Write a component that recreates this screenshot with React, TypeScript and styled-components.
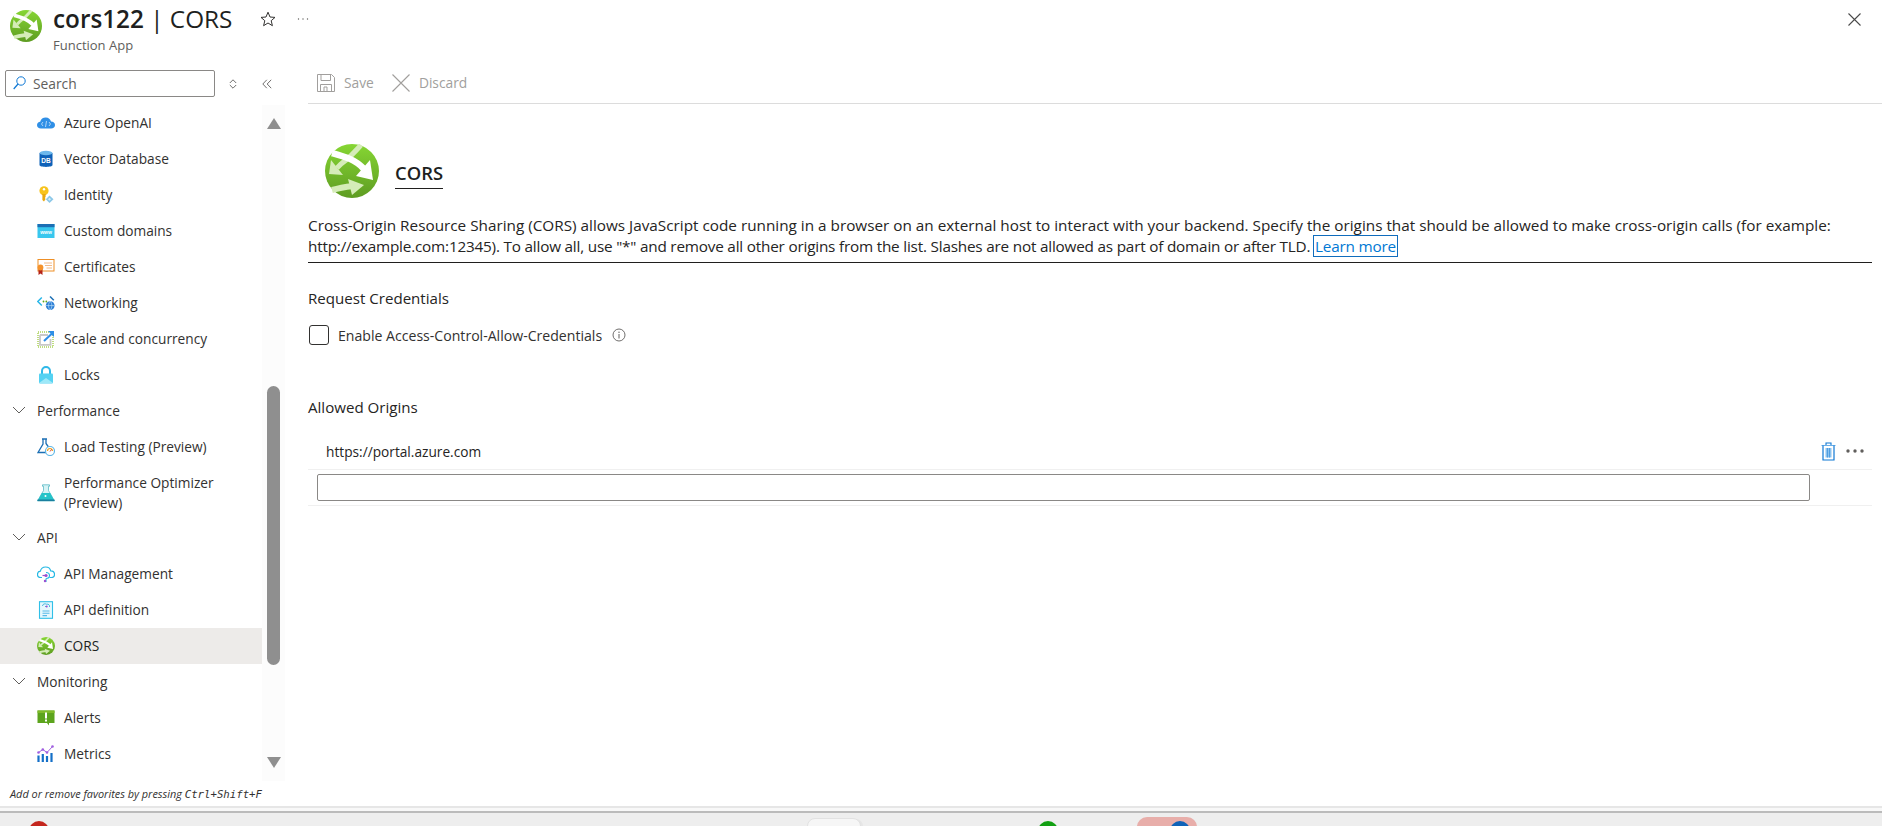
import React from 'react';
import styled, { createGlobalStyle } from 'styled-components';

const GlobalStyle = createGlobalStyle`
  html, body {
    margin: 0;
    padding: 0;
    background: #fff;
    overflow: hidden;
  }
  body {
    font-family: "Open Sans", "Noto Sans", sans-serif;
    font-size: 13.7px;
    color: #323130;
  }
`;

const Page = styled.div`
  width: 1882px;
  height: 826px;
  display: flex;
  flex-direction: column;
  overflow: hidden;
`;

const Header = styled.header`
  height: 60px;
  flex: none;
  display: flex;
  padding: 10px 21px 0 10px;
  box-sizing: border-box;
`;

const TitleBlock = styled.div`
  margin-left: 11px;
  margin-top: -8px;
`;

const Title = styled.h1`
  margin: 0;
  font-size: 24.3px;
  line-height: 33px;
  font-weight: 400;
  color: #201f1e;
  white-space: nowrap;
  strong {
    font-weight: 600;
  }
`;

const Subtitle = styled.div`
  font-size: 13px;
  line-height: 16px;
  color: #605e5c;
  margin-top: 2px;
`;

const HeaderAction = styled.div<{ $gap: number }>`
  margin-left: ${(p) => p.$gap}px;
  margin-top: 1px;
  height: 16px;
  display: flex;
`;

const CloseButton = styled.div`
  margin-left: auto;
  margin-top: 1px;
`;

const Body = styled.div`
  flex: 1;
  display: flex;
  min-height: 0;
`;

const Sidebar = styled.aside`
  width: 285px;
  flex: none;
  display: flex;
  flex-direction: column;
`;

const SearchRow = styled.div`
  height: 27px;
  margin: 10px 0 8px 5px;
  display: flex;
  align-items: center;
  flex: none;
`;

const SearchBox = styled.div`
  width: 210px;
  height: 27px;
  box-sizing: border-box;
  border: 1px solid #8a8886;
  border-radius: 2px;
  display: flex;
  align-items: center;
  padding: 0 0 1px 7px;
  gap: 7px;
  color: #605e5c;
  font-size: 13.8px;
`;

const SearchAction = styled.div<{ $gap: number }>`
  margin-left: ${(p) => p.$gap}px;
  display: flex;
`;

const NavArea = styled.div`
  height: 676px;
  display: flex;
  flex: none;
`;

const NavList = styled.nav`
  width: 262px;
  flex: none;
`;

const NavRow = styled.div<{ $active?: boolean; $tall?: boolean }>`
  height: ${(p) => (p.$tall ? 55 : 36)}px;
  display: flex;
  align-items: center;
  gap: 9px;
  padding-left: 37px;
  box-sizing: border-box;
  line-height: 20px;
  color: ${(p) => (p.$active ? '#201f1e' : '#323130')};
  background: ${(p) => (p.$active ? '#edebe9' : 'transparent')};
`;

const NavGroup = styled.div`
  height: 36px;
  display: flex;
  align-items: center;
  gap: 11px;
  padding: 0 0 2px 12px;
  box-sizing: border-box;
  color: #323130;
`;

const NavIcon = styled.span`
  width: 18px;
  height: 18px;
  flex: none;
  display: flex;
`;

const ScrollTrack = styled.div`
  width: 23px;
  flex: none;
  background: #fcfcfc;
  display: flex;
  flex-direction: column;
  align-items: center;
`;

const ScrollArrow = styled.div<{ $down?: boolean }>`
  width: 0;
  height: 0;
  border-left: 7px solid transparent;
  border-right: 7px solid transparent;
  ${(p) => (p.$down ? 'border-top: 11px solid #8f8f8f;' : 'border-bottom: 11px solid #8f8f8f;')}
  margin-top: ${(p) => (p.$down ? 'auto' : '13px')};
  margin-bottom: ${(p) => (p.$down ? '13px' : '0')};
`;

const ScrollThumb = styled.div`
  width: 13px;
  height: 279px;
  border-radius: 7px;
  background: #8f8f8f;
  margin-top: 257px;
`;

const Hint = styled.div`
  flex: 1;
  padding: 3px 0 0 10px;
  font-size: 10.9px;
  line-height: 20px;
  font-style: italic;
  color: #323130;
  white-space: nowrap;
  code {
    font-family: "DejaVu Sans Mono", monospace;
    font-size: 10.7px;
  }
`;

const Main = styled.main`
  margin-left: 23px;
  flex: 1;
  min-width: 0;
`;

const Toolbar = styled.div`
  margin-top: 10px;
  height: 34px;
  box-sizing: border-box;
  border-bottom: 1px solid #dcdcdc;
  padding: 0 0 8px 9px;
  display: flex;
  align-items: center;
  color: #a19f9d;
`;

const ToolButton = styled.div<{ $gap: number }>`
  display: flex;
  align-items: center;
  gap: 9px;
  margin-right: ${(p) => p.$gap}px;
  font-size: 13.8px;
`;

const Content = styled.div`
  width: 1564px;
`;

const Hero = styled.div`
  display: flex;
  margin: 40px 0 0 17px;
`;

const HeroTitle = styled.h2`
  margin: 16px 0 0 16px;
  height: 29px;
  box-sizing: border-box;
  border-bottom: 1px solid #201f1e;
  font-size: 18.4px;
  line-height: 25px;
  font-weight: 600;
  color: #201f1e;
`;

const Description = styled.p`
  margin: 17px 0 0;
  padding-bottom: 6px;
  border-bottom: 1px solid #201f1e;
  font-size: 15.3px;
  line-height: 20.5px;
  color: #252423;
  white-space: nowrap;
`;

const TightLine = styled.span`
  letter-spacing: -0.2px;
`;

const LearnMore = styled.a`
  color: #0078d4;
  outline: 1px solid #0f6cbd;
  padding: 0 1px;
`;

const SectionLabel = styled.div<{ $top: number }>`
  margin-top: ${(p) => p.$top}px;
  font-size: 15.1px;
  line-height: 20px;
  color: #252423;
`;

const CheckRow = styled.label`
  display: flex;
  align-items: center;
  margin: 17px 0 0 1px;
  height: 20px;
  font-size: 14.1px;
`;

const CheckBox = styled.span`
  width: 20px;
  height: 20px;
  box-sizing: border-box;
  border: 1px solid #323130;
  border-radius: 3px;
  margin-right: 9px;
`;

const InfoIcon = styled.span`
  display: flex;
  margin-left: 10px;
`;

const OriginRow = styled.div`
  margin-top: 16px;
  height: 37px;
  box-sizing: border-box;
  padding: 0 8px 0 18px;
  border-bottom: 1px solid #f0f0f0;
  display: flex;
  align-items: center;
  color: #252423;
`;

const OriginActions = styled.div`
  margin-left: auto;
  display: flex;
  align-items: center;
  gap: 10px;
`;

const InputRow = styled.div`
  height: 36px;
  box-sizing: border-box;
  padding: 4px 0 0 9px;
  border-bottom: 1px solid #f0f0f0;
`;

const OriginInput = styled.div`
  width: 1493px;
  height: 27px;
  box-sizing: border-box;
  border: 1px solid #8a8886;
  border-radius: 2px;
`;

const Shelf = styled.div`
  height: 20px;
  flex: none;
  display: flex;
  flex-direction: column;
  border-top: 2px solid #e6e6e6;
  box-sizing: border-box;
  background: #f8f8f8;
`;

const Taskbar = styled.div`
  margin-top: 3px;
  flex: 1;
  border-top: 2px solid #bbbbbb;
  background: #eeeeee;
  display: flex;
  overflow: hidden;
  padding-left: 29px;
`;

const TaskDot = styled.div<{ $color: string; $left: number }>`
  width: 20px;
  height: 20px;
  flex: none;
  border-radius: 50%;
  background: ${(p) => p.$color};
  margin: 8px 0 0 ${(p) => p.$left}px;
`;

const TaskCard = styled.div`
  width: 52px;
  height: 30px;
  flex: none;
  margin: 5px 0 0 758px;
  border: 1px solid #e2e2e2;
  border-radius: 8px;
  background: #f6f6f6;
  box-shadow: 3px 0 0 -1px #e6e6e6;
`;

const TaskPill = styled.div`
  width: 60px;
  height: 30px;
  flex: none;
  margin: 4px 0 0 79px;
  border-radius: 10px;
  background: #e8aeaa;
  display: flex;
  padding-left: 33px;
  box-sizing: border-box;
`;

const PillDot = styled(TaskDot)`
  margin: 4px 0 0 0;
`;

const AppGlyph = ({ size, uid }: { size: number; uid: string }) => (
  <svg width={size} height={size} viewBox="0 0 54 54" style={{ flex: 'none' }}>
    <defs>
      <linearGradient id={uid} x1="0" y1="0" x2="0" y2="1">
        <stop offset="0" stopColor="#86d633" />
        <stop offset="1" stopColor="#5e9c22" />
      </linearGradient>
    </defs>
    <circle cx="27" cy="27" r="27" fill={`url(#${uid})`} />
    <path d="M36 1 C30 8 24 14 16 20 L12 24" stroke="#d5ecb8" strokeWidth="5" fill="none" />
    <path d="M4 30 L6 16 L18 31 Z" fill="#d5ecb8" />
    <path d="M7 9 C18 12 30 15 39 25" stroke="#fff" strokeWidth="6.5" fill="none" />
    <path d="M48 36 L45 16 L31 32 Z" fill="#fff" />
    <path d="M7 46 C14 44 20 43 28 42" stroke="#d5ecb8" strokeWidth="6" fill="none" />
    <path d="M39 41 L23 35 L27 51 Z" fill="#d5ecb8" />
  </svg>
);

const OpenAiIcon = () => (
  <svg width="18" height="18" viewBox="0 0 18 18">
    <path d="M4 14.5 C1.5 14.5 0 13 0 11 C0 9 1.5 7.7 3.2 7.7 C3.8 5 6 3.5 8.8 3.5 C11.5 3.5 13.5 5.2 14 7.5 C16.3 7.6 18 9 18 11 C18 13 16.5 14.5 14 14.5 Z" fill="#2f8fe6" />
    <path d="M6 8 L4.5 10 L6 12 M12 8 L13.5 10 L12 12 M9.5 7 L8.5 13" stroke="#cfe6fb" strokeWidth="0.8" fill="none" />
  </svg>
);

const DbIcon = () => (
  <svg width="18" height="18" viewBox="0 0 18 18">
    <path d="M2.5 3 V15 C2.5 17.5 15.5 17.5 15.5 15 V3 Z" fill="#0f62b8" />
    <ellipse cx="9" cy="3" rx="6.5" ry="2.2" fill="#6cb8ec" />
    <text x="9" y="13" textAnchor="middle" fontFamily="Liberation Sans, sans-serif" fontSize="6.5" fontWeight="700" fill="#fff">DB</text>
  </svg>
);

const IdentityIcon = () => (
  <svg width="18" height="18" viewBox="0 0 18 18">
    <circle cx="7" cy="4.8" r="4.6" fill="#f7c31c" />
    <circle cx="7" cy="3.3" r="1.2" fill="#fff" />
    <path d="M5.4 8 H8.6 V11 L7.8 12 L8.6 13 L7 15.5 L5.4 14 Z" fill="#e8a80e" />
    <path d="M12.5 9.5 L16.5 13.2 L12.5 17 L8.8 13.2 Z" fill="#8cc8e8" />
    <path d="M12.5 11.8 L14 13.2 L12.5 14.7 L11 13.2 Z" fill="#d7eef9" />
  </svg>
);

const DomainIcon = () => (
  <svg width="18" height="18" viewBox="0 0 18 18">
    <rect x="0.5" y="2" width="17" height="14" fill="#38c7ee" />
    <rect x="0.5" y="2" width="17" height="3.2" fill="#1c6fb4" />
    <text x="9" y="11.8" textAnchor="middle" fontFamily="Liberation Sans, sans-serif" fontSize="5" fontWeight="700" fill="#fff">www</text>
  </svg>
);

const CertIcon = () => (
  <svg width="18" height="18" viewBox="0 0 18 18">
    <rect x="1" y="1.5" width="16" height="11.5" fill="#fff" stroke="#ee8f26" strokeWidth="1" />
    <path d="M7 5 H15 M8 7.5 H15 M9.5 10 H15" stroke="#f0b27a" strokeWidth="0.9" />
    <path d="M1.5 11 V17 L3.5 15.6 L5.5 17 V11 Z" fill="#b52418" />
    <circle cx="3.5" cy="9.5" r="2.9" fill="#f5922a" />
  </svg>
);

const NetworkIcon = () => (
  <svg width="18" height="18" viewBox="0 0 18 18">
    <path d="M4.8 3.5 L0.8 7.5 L4.8 11.5" stroke="#29b6e8" strokeWidth="1.5" fill="none" />
    <path d="M13 2.5 L16.8 6.2" stroke="#1c6fb4" strokeWidth="1.5" fill="none" />
    <circle cx="6.5" cy="7.5" r="0.9" fill="#5ea51e" />
    <circle cx="9.3" cy="7.5" r="0.9" fill="#5ea51e" />
    <circle cx="13.2" cy="11.6" r="4.4" fill="#2c7fd6" />
    <path d="M9 11.6 H17.5 M13.2 7.2 C11 10 11 13.5 13.2 16 C15.4 13.5 15.4 10 13.2 7.2" stroke="#bcdcf6" strokeWidth="0.7" fill="none" />
  </svg>
);

const ScaleIcon = () => (
  <svg width="18" height="18" viewBox="0 0 18 18">
    <rect x="1" y="2" width="15" height="15" fill="none" stroke="#7fba00" strokeWidth="1" strokeDasharray="1 1" />
    <path d="M3 5 H11 M3 5 V14.8 H13.5 V9" stroke="#c8c8c8" strokeWidth="1.8" fill="none" />
    <path d="M7 11 L15 3.5" stroke="#2f8fe6" strokeWidth="2" />
    <path d="M11 1 H17 V7 Z" fill="#2f8fe6" />
  </svg>
);

const LockIcon = () => (
  <svg width="18" height="18" viewBox="0 0 18 18">
    <path d="M5 8 V5 C5 2.8 6.8 1 9 1 C11.2 1 13 2.8 13 5 V8" stroke="#2fb8e8" strokeWidth="2" fill="none" />
    <rect x="2" y="7.5" width="14" height="10" rx="1" fill="#55d2f2" />
    <path d="M2 17 L9 12 L16 17 Z" fill="#9ee8f8" />
  </svg>
);

const FlaskIcon = () => (
  <svg width="18" height="18" viewBox="0 0 18 18">
    <path d="M5 1 H10 M6 1.5 V6 L1 14.5 H11 M9 1.5 V5.5 L11.5 9" stroke="#1c6fb4" strokeWidth="1.3" fill="none" />
    <circle cx="13" cy="13" r="4.5" fill="#fff" stroke="#5fb6e6" strokeWidth="1.2" />
    <path d="M10.5 13 A2.5 2.5 0 0 1 15.5 13" stroke="#f0a020" strokeWidth="1.2" fill="none" />
    <path d="M13 13.5 L14.6 11.4" stroke="#d13438" strokeWidth="0.9" />
  </svg>
);

const OptimizerIcon = () => (
  <svg width="18" height="18" viewBox="0 0 18 18">
    <path d="M5.5 0.8 H12.5 V2.3 H11.5 V6.5 L17.5 17 H0.5 L6.5 6.5 V2.3 H5.5 Z" fill="#d6f3f5" stroke="#2aa5b5" strokeWidth="0.6" />
    <path d="M4.8 9 H13.2 L17.5 17 H0.5 Z" fill="#25c4c9" />
    <path d="M0.5 15.5 H17.5 V17 H0.5 Z" fill="#1a7f9e" />
    <circle cx="8.5" cy="12" r="1" fill="#fff" />
  </svg>
);

const ApiCloudIcon = () => (
  <svg width="18" height="18" viewBox="0 0 18 18">
    <path d="M5 12.5 H3.8 C1.8 12.5 0.5 11 0.5 9.3 C0.5 7.6 1.8 6.3 3.4 6.2 C3.9 3.6 6 2 8.6 2 C11.2 2 13.2 3.6 13.7 5.9 C15.9 6 17.5 7.5 17.5 9.3 C17.5 11 16.2 12.5 14.2 12.5 H12.5" stroke="#25b8e4" strokeWidth="1.2" fill="none" />
    <path d="M9 7.5 C11 7.5 12.5 8.8 12.5 10.5 C12.5 12.2 11 13.5 9 13.5 M9 13.5 V17" stroke="#25b8e4" strokeWidth="1.1" fill="none" />
    <path d="M5.5 10.5 H9" stroke="#9b4fd0" strokeWidth="1.2" />
    <circle cx="9" cy="10.5" r="1.6" fill="#9b4fd0" />
    <circle cx="8" cy="16" r="1.2" fill="#9b4fd0" />
  </svg>
);

const ApiDocIcon = () => (
  <svg width="18" height="18" viewBox="0 0 18 18">
    <rect x="2.5" y="0.7" width="13" height="16.6" fill="#e6f8fd" stroke="#30c0e8" strokeWidth="1.1" />
    <path d="M5.5 5 C5.5 3 8 2.3 9.5 3.2 C11.5 2.8 13 4 12.5 6 M8 5.5 H10" stroke="#25a8d8" strokeWidth="0.8" fill="none" />
    <circle cx="9.7" cy="5.5" r="1" fill="#9b4fd0" />
    <path d="M5.5 10 H12.5 M5.5 12.3 H12.5 M5.5 14.6 H10" stroke="#58b9e8" strokeWidth="1.1" />
  </svg>
);

const AlertIcon = () => (
  <svg width="18" height="18" viewBox="0 0 18 18">
    <path d="M0.5 1.5 H17.5 V14 H12 V16.5 L10 14 H0.5 Z" fill="#5ca41d" />
    <path d="M0.5 1.5 H17.5 V4 H0.5 Z" fill="#7fba29" />
    <rect x="8" y="3.5" width="2" height="6" fill="#fff" />
    <rect x="8" y="10.5" width="2" height="2" fill="#fff" />
  </svg>
);

const MetricsIcon = () => (
  <svg width="18" height="18" viewBox="0 0 18 18">
    <path d="M1.5 10.5 V17 M5.8 9 V17 M10 11 V17 M14.5 8 V17" stroke="#1470c8" strokeWidth="2.2" />
    <path d="M1.5 7.5 L5.8 4.5 L10 7.5 L15.5 1.5" stroke="#a05fe0" strokeWidth="1" fill="none" />
    <circle cx="1.5" cy="7.5" r="1.3" fill="#a05fe0" />
    <circle cx="5.8" cy="4.5" r="1.3" fill="#a05fe0" />
    <circle cx="10" cy="7.5" r="1.3" fill="#a05fe0" />
    <circle cx="15.5" cy="1.5" r="1.3" fill="#a05fe0" />
  </svg>
);

const Chevron = () => (
  <svg width="14" height="8" viewBox="0 0 14 8">
    <path d="M1 1 L7 7 L13 1" stroke="#605e5c" strokeWidth="1" fill="none" />
  </svg>
);

type NavEntry =
  | { kind: 'group'; label: string }
  | { kind: 'item'; label: React.ReactNode; icon: React.ReactNode; active?: boolean; tall?: boolean };

const navEntries: NavEntry[] = [
  { kind: 'item', label: 'Azure OpenAI', icon: <OpenAiIcon /> },
  { kind: 'item', label: 'Vector Database', icon: <DbIcon /> },
  { kind: 'item', label: 'Identity', icon: <IdentityIcon /> },
  { kind: 'item', label: 'Custom domains', icon: <DomainIcon /> },
  { kind: 'item', label: 'Certificates', icon: <CertIcon /> },
  { kind: 'item', label: 'Networking', icon: <NetworkIcon /> },
  { kind: 'item', label: 'Scale and concurrency', icon: <ScaleIcon /> },
  { kind: 'item', label: 'Locks', icon: <LockIcon /> },
  { kind: 'group', label: 'Performance' },
  { kind: 'item', label: 'Load Testing (Preview)', icon: <FlaskIcon /> },
  { kind: 'item', label: <>Performance Optimizer<br />(Preview)</>, icon: <OptimizerIcon />, tall: true },
  { kind: 'group', label: 'API' },
  { kind: 'item', label: 'API Management', icon: <ApiCloudIcon /> },
  { kind: 'item', label: 'API definition', icon: <ApiDocIcon /> },
  { kind: 'item', label: 'CORS', icon: <AppGlyph size={18} uid="nav-cors" />, active: true },
  { kind: 'group', label: 'Monitoring' },
  { kind: 'item', label: 'Alerts', icon: <AlertIcon /> },
  { kind: 'item', label: 'Metrics', icon: <MetricsIcon /> },
];

const App = () => {
  return (
    <Page>
      <GlobalStyle />
      <Header>
        <AppGlyph size={32} uid="head-cors" />
        <TitleBlock>
          <Title>
            <strong>cors122</strong> | CORS
          </Title>
          <Subtitle>Function App</Subtitle>
        </TitleBlock>
        <HeaderAction $gap={28}>
          <svg width="16" height="16" viewBox="0 0 16 16">
            <path d="M8 1.2 L10 6 L15 6.4 L11.2 9.7 L12.4 14.7 L8 12 L3.6 14.7 L4.8 9.7 L1 6.4 L6 6 Z" fill="none" stroke="#323130" strokeWidth="1" />
          </svg>
        </HeaderAction>
        <HeaderAction $gap={21}>
          <svg width="12" height="16" viewBox="0 0 12 16">
            <circle cx="1.5" cy="8" r="0.7" fill="#605e5c" />
            <circle cx="6" cy="8" r="0.7" fill="#605e5c" />
            <circle cx="10.5" cy="8" r="0.7" fill="#605e5c" />
          </svg>
        </HeaderAction>
        <CloseButton>
          <svg width="13" height="13" viewBox="0 0 13 13">
            <path d="M0.5 0.5 L12.5 12.5 M12.5 0.5 L0.5 12.5" stroke="#4a4a4a" strokeWidth="1.1" />
          </svg>
        </CloseButton>
      </Header>
      <Body>
        <Sidebar>
          <SearchRow>
            <SearchBox>
              <svg width="13" height="14" viewBox="0 0 13 14">
                <circle cx="8" cy="5" r="4.2" fill="none" stroke="#0f78d4" strokeWidth="1" />
                <path d="M5 8 L0.7 13" stroke="#0f78d4" strokeWidth="1.2" />
              </svg>
              Search
            </SearchBox>
            <SearchAction $gap={14}>
              <svg width="8" height="10" viewBox="0 0 8 10">
                <path d="M0.8 4 L4 0.8 L7.2 4 M0.8 6 L4 9.2 L7.2 6" fill="none" stroke="#605e5c" strokeWidth="0.9" />
              </svg>
            </SearchAction>
            <SearchAction $gap={25}>
              <svg width="10" height="10" viewBox="0 0 10 10">
                <path d="M4.8 0.8 L0.8 5 L4.8 9.2 M9.2 0.8 L5.2 5 L9.2 9.2" fill="none" stroke="#605e5c" strokeWidth="0.9" />
              </svg>
            </SearchAction>
          </SearchRow>
          <NavArea>
            <NavList>
              {navEntries.map((entry, i) =>
                entry.kind === 'group' ? (
                  <NavGroup key={i}>
                    <Chevron />
                    {entry.label}
                  </NavGroup>
                ) : (
                  <NavRow key={i} $active={entry.active} $tall={entry.tall}>
                    <NavIcon>{entry.icon}</NavIcon>
                    <span>{entry.label}</span>
                  </NavRow>
                ),
              )}
            </NavList>
            <ScrollTrack>
              <ScrollArrow />
              <ScrollThumb />
              <ScrollArrow $down />
            </ScrollTrack>
          </NavArea>
          <Hint>
            Add or remove favorites by pressing <code>Ctrl+Shift+F</code>
          </Hint>
        </Sidebar>
        <Main>
          <Toolbar>
            <ToolButton $gap={18}>
              <svg width="18" height="18" viewBox="0 0 18 18">
                <path d="M0.5 0.5 H14.5 L17.5 3.5 V17.5 H0.5 Z M4 0.5 V6.5 H13.5 V0.5 M3.5 17.5 V10.5 H14.5 V17.5 M7 17.5 V13 H10 V17.5" fill="none" stroke="#a19f9d" strokeWidth="1" />
              </svg>
              Save
            </ToolButton>
            <ToolButton $gap={0}>
              <svg width="18" height="18" viewBox="0 0 18 18">
                <path d="M0.5 0.5 L17.5 17.5 M17.5 0.5 L0.5 17.5" stroke="#a19f9d" strokeWidth="1.1" />
              </svg>
              Discard
            </ToolButton>
          </Toolbar>
          <Content>
            <Hero>
              <AppGlyph size={54} uid="hero-cors" />
              <HeroTitle>CORS</HeroTitle>
            </Hero>
            <Description>
              Cross-Origin Resource Sharing (CORS) allows JavaScript code running in a browser on an external host to interact with your backend. Specify the origins that should be allowed to make cross-origin calls (for example:
              <br />
              <TightLine>
                http://example.com:12345). To allow all, use "*" and remove all other origins from the list. Slashes are not allowed as part of domain or after TLD. <LearnMore>Learn more</LearnMore>
              </TightLine>
            </Description>
            <SectionLabel $top={25}>Request Credentials</SectionLabel>
            <CheckRow>
              <CheckBox />
              Enable Access-Control-Allow-Credentials
              <InfoIcon>
                <svg width="14" height="14" viewBox="0 0 14 14">
                  <circle cx="7" cy="7" r="6" fill="none" stroke="#605e5c" strokeWidth="0.9" />
                  <path d="M7 6 V10.5" stroke="#605e5c" strokeWidth="1" />
                  <circle cx="7" cy="4.2" r="0.7" fill="#605e5c" />
                </svg>
              </InfoIcon>
            </CheckRow>
            <SectionLabel $top={52}>Allowed Origins</SectionLabel>
            <OriginRow>
              https://portal.azure.com
              <OriginActions>
                <svg width="15" height="19" viewBox="0 0 15 19">
                  <path d="M0.5 3.5 H14.5" stroke="#69aee8" strokeWidth="1" />
                  <path d="M5 3 V1 H10 V3" fill="none" stroke="#0f78d4" strokeWidth="1.1" />
                  <path d="M2 3.5 V18 H13 V3.5" fill="none" stroke="#0f78d4" strokeWidth="1.2" />
                  <path d="M4.5 6 H10.5 V15.5 H4.5 Z" fill="#8dc3ee" />
                  <path d="M6.5 6 V15.5 M8.5 6 V15.5" stroke="#4a9be0" strokeWidth="0.9" />
                </svg>
                <svg width="18" height="4" viewBox="0 0 18 4">
                  <circle cx="2" cy="2" r="1.7" fill="#605e5c" />
                  <circle cx="9" cy="2" r="1.7" fill="#605e5c" />
                  <circle cx="16" cy="2" r="1.7" fill="#605e5c" />
                </svg>
              </OriginActions>
            </OriginRow>
            <InputRow>
              <OriginInput />
            </InputRow>
          </Content>
        </Main>
      </Body>
      <Shelf>
        <Taskbar>
          <TaskDot $color="#c4261d" $left={0} />
          <TaskCard />
          <TaskDot $color="#12a012" $left={177} />
          <TaskPill>
            <PillDot $color="#0f62b8" $left={0} />
          </TaskPill>
        </Taskbar>
      </Shelf>
    </Page>
  );
};

export default App;
